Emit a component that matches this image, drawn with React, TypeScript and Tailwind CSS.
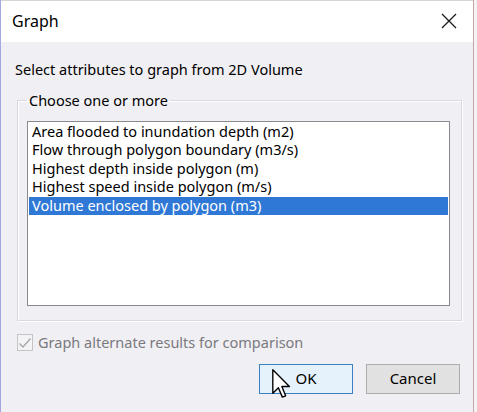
import React, { useState } from 'react';

const items = [
    'Area flooded to inundation depth (m2)',
    'Flow through polygon boundary (m3/s)',
    'Highest depth inside polygon (m)',
    'Highest speed inside polygon (m/s)',
    'Volume enclosed by polygon (m3)',
];

const font = { fontFamily: '"Noto Sans", "Open Sans", sans-serif' };

const App: React.FC = () => {
    const [selected, setSelected] = useState(4);

    return (
        <div className="w-[477px] h-[412px] bg-[#f4f3f6] flex overflow-hidden text-black" style={font}>
            <div className="relative w-[474px] h-full flex flex-col bg-[#f0eff4] border-l border-r border-l-[#a6a6e2] border-r-[#c8a4a8]">
                {/* title bar */}
                <div className="h-[42px] shrink-0 bg-white border-t border-[#d6d6d8] flex items-center justify-between pl-[11px] pr-[10px]">
                    <span className="text-[16px] leading-none -mt-[2px]">Graph</span>
                    <svg width="16" height="16" viewBox="0 0 16 16" className="mr-[6px] -mt-[2px]">
                        <path d="M1 1 L15 15 M15 1 L1 15" stroke="#1a1a1a" strokeWidth="1.3" fill="none" />
                    </svg>
                </div>

                <div className="flex-1 flex flex-col pl-[16px] pr-[11px]">
                    <p className="text-[14.5px] leading-[20px] mt-[17px] -ml-[2px]">Select attributes to graph from 2D Volume</p>

                    <fieldset className="mt-[12px] h-[230px] border border-[#d9d8de] shadow-[inset_1px_1px_0_#ffffff,1px_1px_0_#ffffff] pl-[9px] pr-[11px] pb-[13px]">
                        <legend className="ml-0 px-[2px] text-[14.5px] leading-[18px]">Choose one or more</legend>
                        <ul className="mt-[12px] h-[185px] bg-white border border-[#8a8a8e] pt-px px-px">
                            {items.map((it, i) => (
                                <li
                                    key={it}
                                    onClick={() => setSelected(i)}
                                    className={`h-[18.4px] pl-[3px] text-[14.5px] leading-[17px] whitespace-nowrap ${
                                        i === selected ? 'bg-[#2f78d6] text-white' : 'text-black'
                                    }`}
                                >
                                    {it}
                                </li>
                            ))}
                        </ul>
                    </fieldset>

                    <label className="mt-[11px] flex items-center gap-[5px] text-[14.5px] text-[#7a7a7e]">
                        <span className="w-[16px] h-[17px] border border-[#c4c4c8] bg-[#f3f3f6] flex items-center justify-center">
                            <svg width="14" height="12" viewBox="0 0 14 12">
                                <path d="M1.5 6.5 L5 10 L12.5 1.5" stroke="#a8a8ac" strokeWidth="1.4" fill="none" />
                            </svg>
                        </span>
                        Graph alternate results for comparison
                    </label>

                    <div className="mt-[10px] mr-[2px] flex justify-end gap-[13px]">
                        <button className="w-[94px] h-[30px] bg-[#e5f1fb] border border-[#3c80c4] text-[15px] leading-none">OK</button>
                        <button className="w-[94px] h-[30px] bg-[#e1e1e1] border border-[#adadad] text-[15px] leading-none">Cancel</button>
                    </div>
                </div>

                {/* mouse pointer */}
                <svg className="absolute left-[271px] top-[369px]" width="19" height="31" viewBox="0 0 12.5 20.5">
                    <path d="M0.5 0.5 L0.5 16 L4.2 12.4 L6.8 18.6 L9 17.7 L6.5 11.6 L11.5 11.6 Z" fill="#ffffff" stroke="#000000" strokeWidth="0.9" strokeLinejoin="round" />
                </svg>
            </div>
        </div>
    );
};

export default App;
